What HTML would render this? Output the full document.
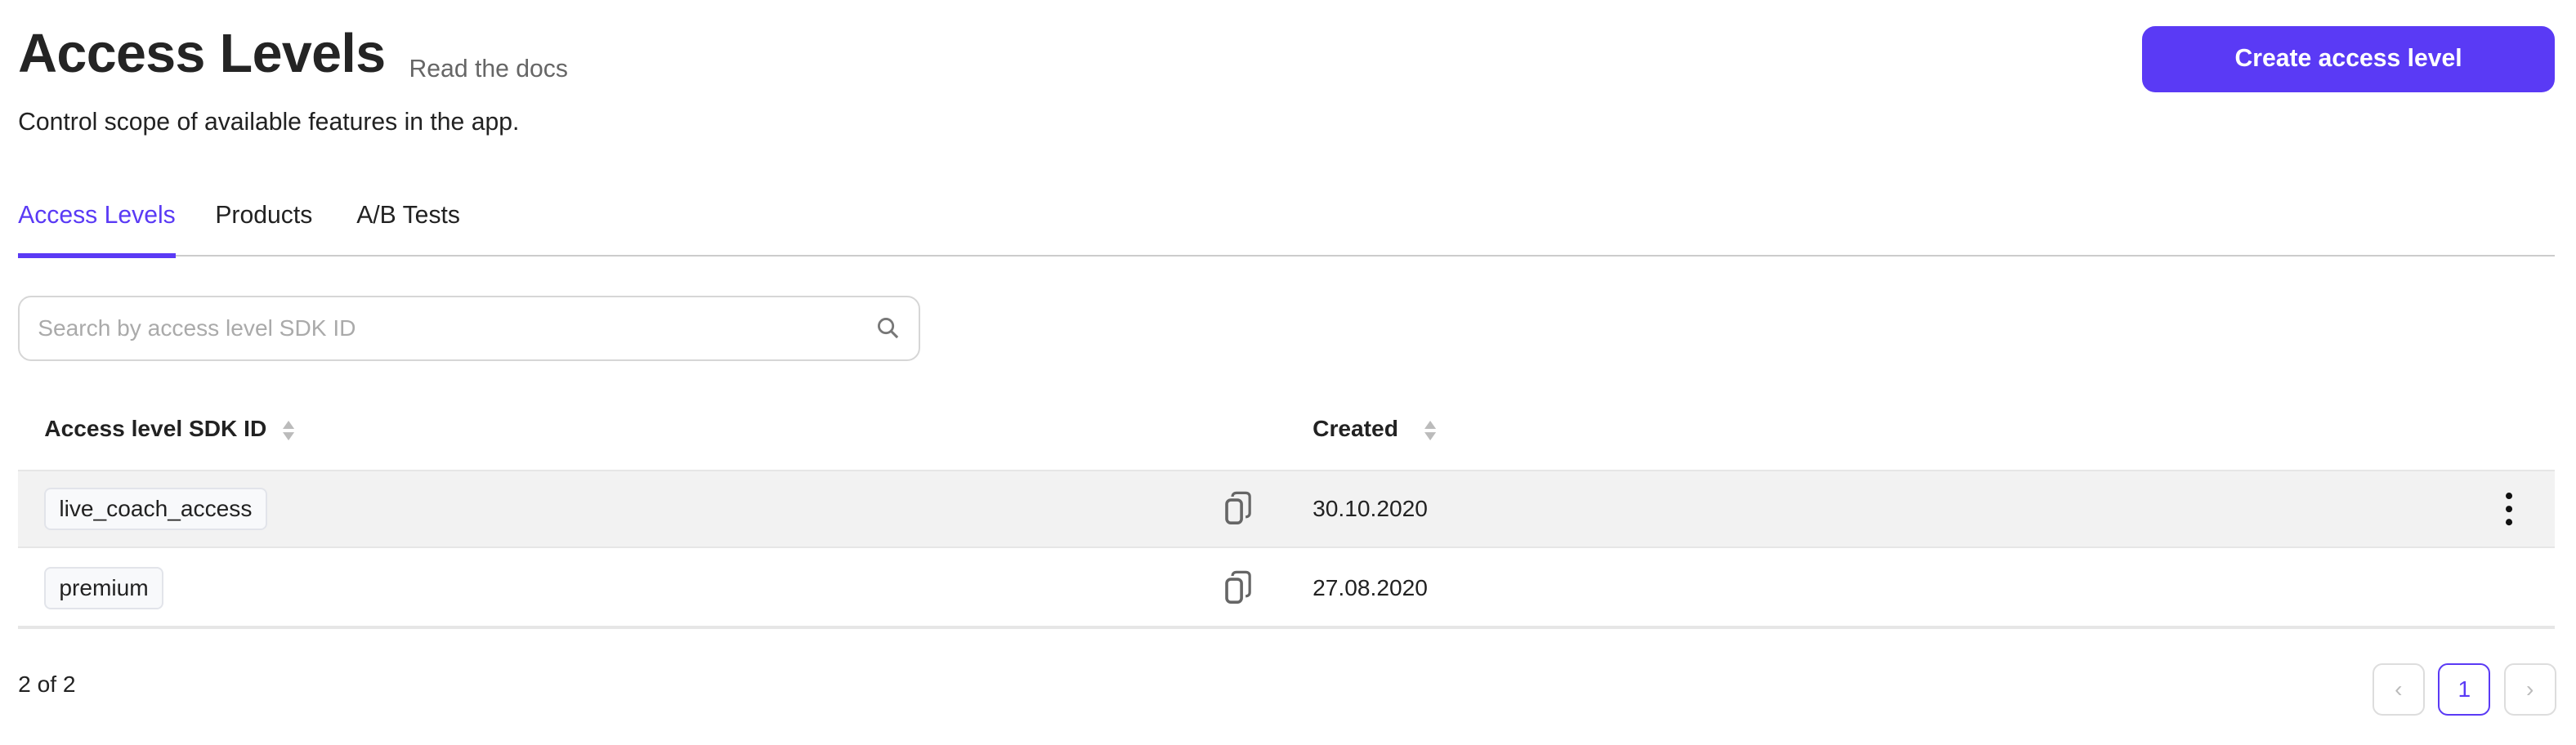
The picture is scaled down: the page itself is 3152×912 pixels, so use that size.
<!DOCTYPE html>
<html><head><meta charset="utf-8"><style>
html{zoom:2.0102}
body{margin:0;width:1568px;height:453px;background:#fff;font-family:"Liberation Sans",sans-serif;color:#222;position:relative;overflow:hidden}
.a{position:absolute}
</style></head><body>
<div class="a" style="left:11px;top:14px;font-size:33px;font-weight:bold;letter-spacing:-0.3px;color:#242424">Access Levels</div>
<div class="a" style="left:249px;top:34px;font-size:15px;color:#666">Read the docs</div>
<div class="a" style="left:11px;top:66px;font-size:15px;color:#222">Control scope of available features in the app.</div>
<div class="a" style="left:1304px;top:16px;width:251px;height:40px;background:#5a3af5;border-radius:8px;color:#fff;font-size:15px;font-weight:bold;text-align:center;line-height:40px">Create access level</div>
<div class="a" style="left:11px;top:123px;font-size:15px;color:#5a3af5">Access Levels</div>
<div class="a" style="left:131px;top:123px;font-size:15px;color:#222">Products</div>
<div class="a" style="left:217px;top:123px;font-size:15px;color:#222">A/B Tests</div>
<div class="a" style="left:11px;top:155px;width:1544px;height:1px;background:#ccc"></div>
<div class="a" style="left:11px;top:154px;width:96px;height:3px;background:#5a3af5"></div>
<div class="a" style="left:11px;top:180px;width:547px;height:38px;border:1px solid #d6d6d6;border-radius:8px"></div>
<div class="a" style="left:23px;top:192px;font-size:14px;color:#aaa">Search by access level SDK ID</div>
<svg class="a" style="left:534px;top:193px" width="14" height="14" viewBox="0 0 14 14"><circle cx="5.5" cy="5.5" r="4.3" fill="none" stroke="#777" stroke-width="1.4"/><path d="M8.8 8.8L12.5 12.5" stroke="#777" stroke-width="1.5"/></svg>
<div class="a" style="left:27px;top:253px;font-size:14px;font-weight:bold;color:#222">Access level SDK ID</div>
<svg class="a" style="left:171px;top:255px" width="9" height="14"><path d="M4.5 1L8 6H1z M1 8H8L4.5 13z" fill="#bbb"/></svg>
<div class="a" style="left:799px;top:253px;font-size:14px;font-weight:bold;color:#222">Created</div>
<svg class="a" style="left:866px;top:255px" width="9" height="14"><path d="M4.5 1L8 6H1z M1 8H8L4.5 13z" fill="#bbb"/></svg>
<div class="a" style="left:11px;top:286px;width:1544px;height:1px;background:#e6e6e6"></div>
<div class="a" style="left:11px;top:287px;width:1544px;height:46px;background:#f2f2f2"></div>
<div class="a" style="left:11px;top:333px;width:1544px;height:1px;background:#e6e6e6"></div>
<div class="a" style="left:11px;top:381px;width:1544px;height:2px;background:#e6e6e6"></div>
<div class="a" style="left:27px;top:297px;height:24px;padding:0 8px;border:1px solid #e2e4ea;background:#f8f9fb;border-radius:4px;font-size:14px;line-height:24px;color:#222">live_coach_access</div>
<div class="a" style="left:27px;top:345px;height:24px;padding:0 8px;border:1px solid #e2e4ea;background:#f8f9fb;border-radius:4px;font-size:14px;line-height:24px;color:#222">premium</div>
<svg class="a" style="left:745px;top:299px" width="20" height="22" viewBox="0 0 20 22"><rect x="1.5" y="5.5" width="9" height="14" rx="2.5" fill="none" stroke="#666" stroke-width="1.8"/><path d="M5 3.5C5 2 6 1.2 7.5 1.2H13C14.5 1.2 15.5 2 15.5 3.5V13.5C15.5 15 14.5 15.8 13 15.8" fill="none" stroke="#666" stroke-width="1.6"/></svg>
<svg class="a" style="left:745px;top:347px" width="20" height="22" viewBox="0 0 20 22"><rect x="1.5" y="5.5" width="9" height="14" rx="2.5" fill="none" stroke="#666" stroke-width="1.8"/><path d="M5 3.5C5 2 6 1.2 7.5 1.2H13C14.5 1.2 15.5 2 15.5 3.5V13.5C15.5 15 14.5 15.8 13 15.8" fill="none" stroke="#666" stroke-width="1.6"/></svg>
<div class="a" style="left:799px;top:302px;font-size:14px;color:#222">30.10.2020</div>
<div class="a" style="left:799px;top:350px;font-size:14px;color:#222">27.08.2020</div>
<svg class="a" style="left:1523px;top:299px" width="8" height="22"><circle cx="4" cy="3" r="2" fill="#111"/><circle cx="4" cy="11" r="2" fill="#111"/><circle cx="4" cy="19" r="2" fill="#111"/></svg>
<div class="a" style="left:11px;top:409px;font-size:14px;color:#222">2 of 2</div>
<div class="a" style="left:1444px;top:404px;width:30px;height:30px;border:1px solid #ddd;border-radius:6px;color:#bbb;text-align:center;line-height:30px;font-size:14px">&lsaquo;</div>
<div class="a" style="left:1484px;top:404px;width:30px;height:30px;border:1px solid #5a3af5;border-radius:6px;color:#5a3af5;text-align:center;line-height:30px;font-size:14px">1</div>
<div class="a" style="left:1524px;top:404px;width:30px;height:30px;border:1px solid #ddd;border-radius:6px;color:#bbb;text-align:center;line-height:30px;font-size:14px">&rsaquo;</div>
</body></html>
